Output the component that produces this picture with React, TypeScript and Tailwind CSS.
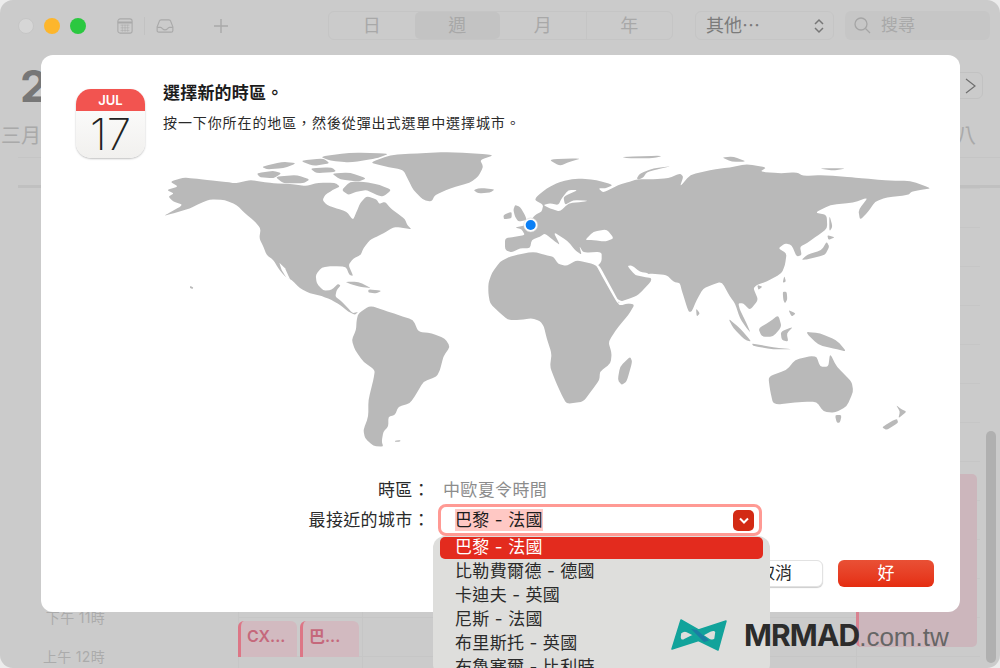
import React from "react";

const land1 = [
  "M60 125 L100 113 130 115 170 120 230 126 255 130 300 120 335 125 370 130 420 132 470 138 505 128 555 128 570 140 548 150 525 165 518 180 530 195 560 205 590 215 605 235 610 238 622 210 630 190 650 168 680 178 688 192 705 185 722 205 745 222 765 238 772 255 785 268 750 262 730 262 700 280 680 290 660 300 640 325 632 345 610 355 595 375 610 408 598 405 588 380 550 378 515 382 497 405 500 430 520 452 545 450 563 432 572 436 560 450 556 470 572 482 590 500 608 520 625 515 615 525 595 515 570 495 545 480 515 468 480 460 450 445 425 420 405 410 385 385 370 360 350 345 340 320 328 295 332 265 310 240 285 220 260 195 225 180 180 178 150 190 120 205 70 220 40 228 100 195 70 185 55 170 72 160 50 150 85 140 Z",
  "M575 150 L600 125 640 125 690 135 725 150 700 170 680 165 650 150 620 155 595 165 Z",
  "M320 100 L370 92 395 100 370 115 330 112 Z",
  "M375 110 L440 105 480 118 460 130 400 130 Z",
  "M335 80 L400 65 440 70 400 85 350 88 Z",
  "M450 62 L520 55 540 70 490 78 Z",
  "M510 50 L600 38 720 40 680 55 600 68 540 62 Z",
  "M545 100 L600 98 650 115 625 125 570 118 Z",
  "M480 85 L545 82 560 95 500 100 Z",
  "M660 68 L720 45 800 40 900 36 1035 44 990 60 1000 80 985 110 960 128 900 145 855 165 845 185 820 180 790 150 775 120 760 90 700 78 Z",
  "M970 150 L990 144 1035 148 1020 158 985 160 Z",
  "M1095 195 L1110 200 1125 225 1130 240 1105 245 1095 230 1090 210 Z",
  "M1060 225 L1085 215 1085 235 1062 238 Z",
  "M585 425 L625 425 665 445 630 440 600 432 Z",
  "M655 448 L695 452 680 460 655 458 Z",
  "M120 438 L130 442 128 447 120 444 Z",
  "M735 902 L752 900 750 905 735 905 Z",
  "M625 520 L660 497 700 510 745 525 790 540 805 575 845 580 885 595 900 620 880 650 870 690 860 710 820 725 800 760 780 790 745 800 735 825 715 830 715 860 700 875 695 905 700 920 670 918 645 895 640 870 655 830 655 780 670 720 675 690 640 665 615 630 605 600 618 570 620 540 Z",
];
const land2 = [
  "M-105 295 L-75 290 -45 285 -55 268 -75 262 -50 258 -30 245 -15 225 5 215 10 195 -15 180 -10 170 20 145 60 125 110 115 170 120 220 135 195 145 175 145 190 158 235 135 270 125 290 118 340 118 385 115 420 100 430 110 420 140 450 105 510 90 570 82 620 72 680 82 660 95 720 100 770 97 790 108 850 105 950 113 1000 118 1050 122 1110 122 1175 145 1140 150 1115 155 1105 165 1040 172 1005 185 985 215 960 240 955 210 985 172 940 188 870 195 825 218 860 225 862 265 835 285 800 310 780 320 785 345 770 350 755 315 735 310 715 325 740 340 735 375 725 400 680 425 650 435 640 445 655 480 630 510 610 490 595 490 600 510 615 540 632 578 620 565 600 535 585 490 570 470 545 425 515 435 490 445 470 480 455 515 445 515 425 450 420 430 400 425 380 405 320 400 337 420 300 460 285 470 235 487 170 380 185 365 185 335 130 338 118 318 125 345 105 330 85 305 40 275 60 315 45 305 15 280 0 290 -25 300 -30 325 -60 325 -85 337 -105 330 Z",
  "M-155 430 L-145 400 -120 365 -90 350 -70 345 -20 335 15 345 40 350 55 372 80 378 110 360 170 375 200 430 235 490 285 492 265 525 235 560 205 605 215 640 212 670 180 695 178 720 160 745 130 785 80 792 65 765 45 720 30 680 35 640 20 595 12 560 0 543 -25 535 -60 540 -95 540 -125 515 -150 490 -155 460 Z",
  "M290 115 L300 100 340 85 395 78 350 88 320 97 310 112 296 119 Z",
  "M25 58 L125 55 90 65 60 78 Z",
  "M245 50 L370 47 340 55 260 55 Z",
  "M545 52 L580 50 620 65 575 65 Z",
  "M835 85 L920 85 880 92 Z",
  "M785 360 L800 345 845 330 860 305 868 320 855 345 800 358 Z",
  "M862 285 L885 292 865 300 Z",
  "M868 225 L878 260 868 275 Z",
  "M733 408 L738 425 728 428 Z",
  "M728 455 L740 455 742 478 735 490 730 480 Z",
  "M745 510 L768 520 755 530 Z",
  "M652 435 L668 440 655 450 Z",
  "M468 505 L480 520 470 530 Z",
  "M565 535 L600 565 635 605 615 600 580 565 Z",
  "M635 610 L700 622 760 628 700 628 640 618 Z",
  "M655 565 L690 545 715 525 725 560 700 590 665 590 Z",
  "M722 575 L760 560 740 580 745 605 725 600 Z",
  "M795 575 L840 580 890 600 920 635 880 625 835 615 Z",
  "M270 650 L277 665 260 725 245 735 233 720 240 680 Z",
  "M685 710 L740 690 765 660 810 648 830 650 840 680 865 680 870 640 890 680 935 725 940 755 920 800 885 818 850 815 830 785 790 785 700 795 690 750 Z",
  "M885 825 L905 825 900 848 890 848 Z",
  "M1025 862 L1070 835 1075 848 1040 870 Z",
  "M1068 795 L1085 808 1100 815 1075 835 1080 815 Z",
];
const water2 = [
  "M135 300 L160 275 200 268 222 295 195 305 160 300 Z",
  "M10 195 L30 205 60 215 85 190 130 185 145 182 100 180 75 195 70 170 115 150 85 150 65 175 55 195 30 190 Z",
  "M168 376 L178 376 238 487 232 490 Z",
  "M232 488 L296 472 300 478 240 497 Z",
  "M262 378 L275 376 300 395 325 400 335 415 310 410 285 405 Z",
];

// rounds each polygon's corners, so the coast does not read as straight facets
function soften(d: string) {
  const n = d.match(/-?\d+(\.\d+)?/g)!.map(Number);
  const p: [number, number][] = [];
  for (let i = 0; i + 1 < n.length; i += 2) p.push([n[i], n[i + 1]]);
  const t = 0.28;
  const lerp = (a: [number, number], b: [number, number], k: number) =>
    `${(a[0] + (b[0] - a[0]) * k).toFixed(1)} ${(a[1] + (b[1] - a[1]) * k).toFixed(1)}`;
  let out = "";
  p.forEach((c, i) => {
    const prev = p[(i - 1 + p.length) % p.length];
    const next = p[(i + 1) % p.length];
    out += `${i === 0 ? "M" : "L"}${lerp(c, prev, t)} Q${c[0]} ${c[1]} ${lerp(c, next, t)} `;
  });
  return out + "Z";
}

const cities = ["比勒費爾德 - 德國", "卡迪夫 - 英國", "尼斯 - 法國", "布里斯托 - 英國", "布魯塞爾 - 比利時"];

function Hour({ label, col, children }: { label?: string; col?: number; children?: React.ReactNode }) {
  return (
    <div className="flex h-[39px]">
      <div className="w-[238px] relative">
        {label && (
          <span className="absolute right-[133px] -top-[10px] text-[14px] leading-[22px] tracking-[0.3px] text-[#ababab] whitespace-nowrap">{label}</span>
        )}
      </div>
      {[0, 1, 2, 3, 4, 5].map((i) => (
        <div key={i} className="w-[123.6px] border-l border-t border-[#c6c6c6] relative">
          {i === col && children}
        </div>
      ))}
    </div>
  );
}

export default function App() {
  return (
    <div className="relative w-[1000px] h-[668px] overflow-hidden bg-[#ececec] [font-family:Inter,'Noto_Sans_CJK_TC',sans-serif]">
      <div className="isolate w-full h-full rounded-[13px] bg-[#cbcbcb] overflow-hidden flex flex-col">
        {/* toolbar */}
        <div className="h-[55px] shrink-0 flex items-center pl-[18px] pr-[10px] pb-[4px]">
          <div className="flex gap-[10px]">
            <div className="w-[16px] h-[16px] rounded-full bg-[#d6d6d6] border border-[#c6c6c6]" />
            <div className="w-[16px] h-[16px] rounded-full bg-[#fdb62c]" />
            <div className="w-[16px] h-[16px] rounded-full bg-[#2bc840]" />
          </div>
          <svg width="16" height="16" viewBox="0 0 18 18" className="ml-[31px]" fill="none" stroke="#a9a9a9" strokeWidth="1.2">
            <rect x="1" y="1" width="16" height="16" rx="2.5" />
            <path d="M1 5h16" strokeWidth="2.4" />
            <path d="M4 8h10M4 11h10M4 14h10M6 7.5v8M9 7.5v8M12 7.5v8" strokeWidth="0.6" />
          </svg>
          <div className="w-px h-[18px] bg-[#c2c2c2] ml-[11px]" />
          <svg width="20" height="14" viewBox="0 0 20 16" className="ml-[10px]" fill="none" stroke="#a9a9a9" strokeWidth="1.3" strokeLinejoin="round">
            <path d="M1 9 L3.5 2.5 Q4 1 5.5 1 H14.5 Q16 1 16.5 2.5 L19 9 V13 Q19 15 17 15 H3 Q1 15 1 13 Z" />
            <path d="M1 9.5 H5 Q6 9.5 7 11 Q10 14 13 11 Q14 9.5 15 9.5 H19" />
          </svg>
          <svg width="14" height="14" viewBox="0 0 14 14" className="ml-[39px]" stroke="#a9a9a9" strokeWidth="1.4">
            <path d="M7 0v14M0 7h14" />
          </svg>
          {/* segments */}
          <div className="ml-[100px] w-[345px] h-[29px] rounded-[6px] border border-[#c5c5c5] flex text-[18px] text-[#a8a8a8]">
            <div className="flex-1 flex items-center justify-center">日</div>
            <div className="flex-1 flex items-center justify-center bg-[#c3c3c3] rounded-[5px]">週</div>
            <div className="flex-1 flex items-center justify-center border-r border-[#c5c5c5]">月</div>
            <div className="flex-1 flex items-center justify-center">年</div>
          </div>
          <div className="ml-[22px] w-[139px] h-[29px] rounded-[6px] border border-[#c5c5c5] flex items-center justify-between pl-[10px] pr-[9px] text-[18px] text-[#7b7b7b]">
            <span>其他⋯</span>
            <svg width="10" height="16" viewBox="0 0 10 16" fill="none" stroke="#777" strokeWidth="1.5">
              <path d="M1 6l4-4 4 4M1 10l4 4 4-4" />
            </svg>
          </div>
          <div className="ml-[11px] w-[145px] h-[29px] rounded-[6px] bg-[#c6c6c6] flex items-center pl-[9px] text-[17px] text-[#a9a9a9]">
            <svg width="17" height="17" viewBox="0 0 17 17" fill="none" stroke="#a5a5a5" strokeWidth="1.3">
              <circle cx="7" cy="7" r="6" />
              <path d="M11.5 11.5L16 16" />
            </svg>
            <span className="ml-[10px]">搜尋</span>
          </div>
        </div>
        {/* date header */}
        <div className="h-[61px] shrink-0 flex justify-between items-start pl-[20px] pr-[17px]">
          <span className="text-[44px] leading-[62px] font-bold text-[#777777]">2</span>
          <div className="mt-[17px] w-[30px] h-[27px] rounded-[6px] border border-[#c2c2c2] flex items-center justify-end pr-[6px]">
            <svg width="11" height="16" viewBox="0 0 11 16" fill="none" stroke="#707070" strokeWidth="1.2">
              <path d="M1 1l9 7-9 7" />
            </svg>
          </div>
        </div>
        <div className="h-[41px] shrink-0 flex justify-between pl-[1px] pr-[24px] text-[20px] leading-[40px] text-[#a9a9a9]">
          <span>三月</span>
          <span>八</span>
        </div>
        <div className="h-[28px] shrink-0 border-t border-[#c5c5c5] ml-[18px]" />
        <div className="h-[3px] shrink-0 bg-[#c0c0c0] ml-[18px]" />
        {/* hour grid */}
        <div className="relative">
          <div className="absolute right-[4px] top-[243px] w-[10px] h-[232px] rounded-full bg-[#b0b0b0]" />
          <div className="flex flex-col">
            {[0, 1, 2, 3, 4, 5, 6, 7, 8, 9, 10, 11, 12].map((idx) =>
              idx === 7 ? (
                <Hour key={idx} col={5}>
                  <div className="absolute z-10 left-[-1px] top-[12px] w-[121px] h-[173px] rounded-[5px] bg-[#ccb6bc] border-l-[3px] border-[#d98290]" />
                </Hour>
              ) : idx === 11 ? (
                <Hour key={idx} label="下午 11時" col={0}>
                  <div className="absolute z-10 left-[-1px] top-[3px] w-[246px] h-[36px] flex gap-[3px]">
                    <div className="w-[59px] rounded-t-[6px] bg-[#d2bac0] border-l-[3px] border-[#dd7686] pl-[6px] text-[16px] leading-[30px] font-semibold text-[#c5687b]">CX...</div>
                    <div className="w-[59px] rounded-t-[6px] bg-[#d2bac0] border-l-[3px] border-[#dd7686] pl-[6px] text-[16px] leading-[30px] font-semibold text-[#c5687b]">巴...</div>
                  </div>
                </Hour>
              ) : (
                <Hour key={idx} label={idx === 12 ? "上午 12時" : undefined} />
              )
            )}
          </div>
        </div>
      </div>

      {/* dialog */}
      <div className="absolute z-10 left-[41px] top-[55px] w-[919px] h-[557px] rounded-[12px] bg-white">
        <div className="flex pl-[35px] h-[405px]">
          <div className="mt-[34px] w-[69px] h-[69px] rounded-[15px] overflow-hidden shrink-0 bg-gradient-to-b from-white to-[#f1f0ee] shadow-[0_1px_2px_rgba(0,0,0,0.25)]">
            <div className="h-[22px] bg-[#f25450] text-white text-center text-[13px] leading-[23px] font-semibold">JUL</div>
            <div className="text-center text-[44px] leading-[47px] font-extralight text-[#222222]">17</div>
          </div>
          <div className="ml-[18px] flex flex-col">
            <div className="mt-[27px] h-[23px] text-[17px] leading-[23px] tracking-[0.2px] font-bold text-[#1c1c1c] whitespace-nowrap">選擇新的時區。</div>
            <div className="mt-[8px] h-[20px] text-[14px] leading-[20px] tracking-[0.9px] text-[#2a2a2a] whitespace-nowrap">按一下你所在的地區，然後從彈出式選單中選擇城市。</div>
            <svg viewBox="0 0 2400 960" width="800" height="320" className="block -ml-[13px] mt-[7px] shrink-0">
              <g fill="#b9b9b9">
                {land1.map((d, i) => <path key={i} d={soften(d)} />)}
                <g transform="translate(1170 0)">
                  {land2.map((d, i) => <path key={i} d={soften(d)} />)}
                </g>
              </g>
              <path d="M388 368 L405 385 420 418 410 415 395 390 Z" fill="#ffffff" />
              <g transform="translate(1170 0)" fill="#ffffff">
                {water2.map((d, i) => <path key={i} d={soften(d)} />)}
              </g>
              <circle cx="1142" cy="255" r="21" fill="#ffffff" stroke="#d5d5d5" strokeWidth="1.5" />
              <circle cx="1142" cy="255" r="15" fill="#0a7ff5" />
            </svg>
          </div>
        </div>
        <div className="mt-[17px] flex items-center h-[24px] pt-[3px] text-[17px] tracking-[0.35px] whitespace-nowrap">
          <span className="w-[389px] text-right text-[#2a2a2a]">時區：</span>
          <span className="ml-[13px] text-[#8c8c8c]">中歐夏令時間</span>
        </div>
        <div className="mt-[3px] flex items-center h-[32px] text-[17px] tracking-[0.35px] whitespace-nowrap">
          <span className="w-[389px] text-right text-[#2a2a2a] pt-[2px]">最接近的城市：</span>
          <div className="relative ml-[8px] w-[324px] h-[32px] rounded-[8px] border-[3px] border-[#ff9a94] bg-white flex items-center justify-between pl-[14px] pr-[5px]">
            <span className="bg-[#ffc8c4] text-[#1c1c1c] leading-[23px] h-[22px]">巴黎 - 法國</span>
            <div className="w-[21px] h-[21px] rounded-[5px] bg-[#d32a14] flex items-center justify-center">
              <svg width="10" height="7" viewBox="0 0 10 7" fill="none" stroke="#ffffff" strokeWidth="2">
                <path d="M1 1.5l4 4 4-4" />
              </svg>
            </div>
            <div className="absolute z-10 left-[-8px] top-[29px] w-[337px] h-[140px] rounded-[12px] bg-[#dededc] px-[7px] pt-[1px] text-[#2a2a2a]">
              <div className="h-[22px] rounded-[5px] bg-[#e32b1e] text-white pl-[15px] leading-[20px]">巴黎 - 法國</div>
              {cities.map((c) => (
                <div key={c} className="h-[24px] pl-[15px] leading-[24px] first:mt-[1px]">{c}</div>
              ))}
            </div>
          </div>
        </div>
        <div className="mt-[24px] flex justify-end gap-[15px] pr-[26px] text-[17px]">
          <button className="w-[96px] h-[27px] rounded-[6px] bg-white border border-[#e2e2e2] shadow-[0_1px_1px_rgba(0,0,0,0.2)] text-[#2a2a2a] text-center">取消</button>
          <button className="w-[96px] h-[27px] rounded-[6px] bg-gradient-to-b from-[#e95035] to-[#e52c0f] text-white">好</button>
        </div>
      </div>

      {/* watermark */}
      <div className="absolute z-20 left-[671px] top-[619px] flex items-center h-[33px] whitespace-nowrap">
        <svg width="56" height="33" viewBox="0 0 56 33">
          <path fillRule="evenodd" fill="#12a39b" strokeLinejoin="round" stroke="#12a39b" strokeWidth="1.5" d="M10 1 L27.5 11 L55 2 L47 31 L27.5 21.5 L1 30 Z M9.5 14 Q13 11 16 12.5 L23 16 L13 21 Q9 22 9 18 Z M31.5 16 L39 12 Q44 10 45 13 L44 20 Q42.5 22 39 21 Z" />
          <path d="M20 10 L26 11 L38 21.5 L33 23 Z" fill="#1b7ea3" />
        </svg>
        <span className="ml-[17px] text-[30px] leading-[33px] font-bold tracking-[-0.9px] text-[#2c2c2c]">MRMAD</span>
        <span className="[font-family:'Liberation_Sans',sans-serif] text-[26px] leading-[33px] text-[#666666] mt-[3px]">.com.tw</span>
      </div>
    </div>
  );
}
